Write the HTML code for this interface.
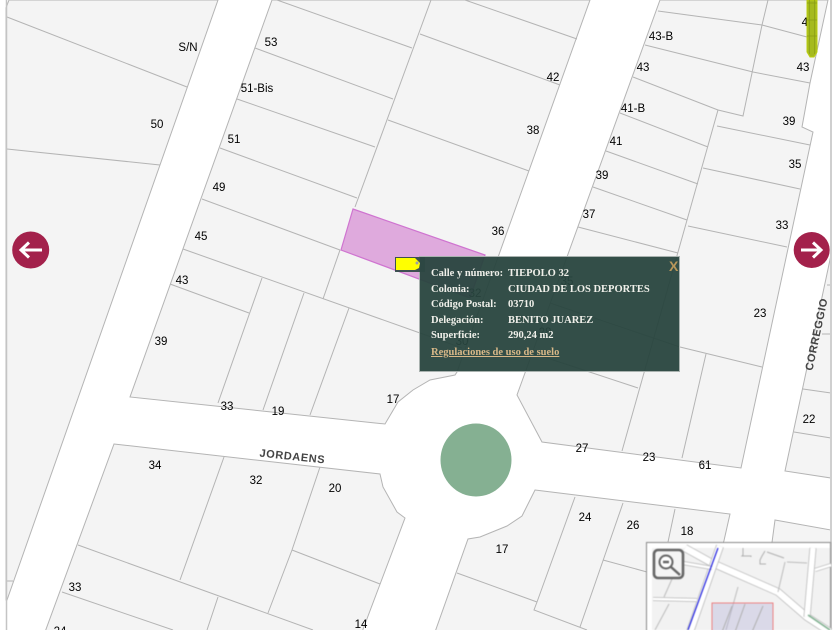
<!DOCTYPE html>
<html><head><meta charset="utf-8"><title>Mapa</title>
<style>
html,body{margin:0;padding:0;background:#fff;}
#w{position:relative;width:840px;height:630px;overflow:hidden;background:#fff;}
svg{position:absolute;left:0;top:0;}
#map{filter:blur(.35px);}
#map text{font-family:"Liberation Sans",sans-serif;font-size:11.5px;fill:#000;text-anchor:middle;}
#pop{position:absolute;left:420px;top:257px;width:259px;height:114px;background:rgba(40,68,62,.95);box-shadow:0 0 0 1px #a9b2af;box-sizing:border-box;filter:blur(.2px);}
#pop div{position:absolute;font:bold 10.5px/12px "Liberation Serif",serif;color:#f0f0ea;white-space:nowrap;}
#pop .b{left:88px;}
#pop .a{left:11px;}
</style></head><body><div id="w">
<svg id="map" width="840" height="630" viewBox="0 0 840 630">
<g fill="#f4f4f4" stroke="#b4b4b4" stroke-width="1">
<polygon points="6,8 9,0 218,0 7,600 6,600"/>
<polygon points="272,0 590,0 457,372 455,375 430,380 413,390 398,402 385,424 130,397"/>
<polygon points="660,0 828,0 810,83 802,127 813,132 741,468 542,442 517,395"/>
<polygon points="831,255 785,471 831,478"/>
<polygon points="114,444 380,474 383,487 397,512 405,518 362,632 45,632"/>
<polygon points="535,490 730,514 723,545 720,632 435,632 468,539 480,537 507,526 522,516"/>
<polygon points="775,520 831,530 831,632 760,632"/>
</g>
<polygon points="353,209 485,255 470,298 341,250" fill="#dfaadd" stroke="#cf74d0" stroke-width="1.2"/>
<g fill="none" stroke="#b4b4b4" stroke-width="1">
<path d="M7,17L187,87M7,149L160,165M6,581H13"/>
<path d="M431,0L355,207M340,250L323,299"/>
<path d="M277,0L412,48M255,48L393,99M237,99L375,147M220,148L357,198M202,199L340,250"/>
<path d="M465,0L577,39M420,34L560,85M388,120L529,171"/>
<path d="M183,249L420,333L462,348"/>
<path d="M262,278L218,403M304,293L263,410M349,308L310,415M170,284L249,313"/>
<path d="M658,11L762,25M645,45L753,72M633,77L718,110M620,113L708,147M606,151L698,184M593,187L687,220M578,227L678,253"/>
<path d="M768,0L762,25L752,73L743,116L718,110L622,451"/>
<path d="M762,25L807,37M753,72L810,83M717,126L810,145M703,168L800,189M688,226L787,247"/>
<path d="M550,303L680,347L762,367M706,354L682,458M532,353L638,388"/>
<path d="M827,285H831M822,334H831M803,389L831,393M794,432L831,438"/>
<path d="M78,545L313,630M224,457L180,580M320,467L292,550L268,613M292,550L380,584M62,592L173,630M218,597L207,630"/>
<path d="M575,497L537,602L534,610L587,630M457,573L537,602M623,503L580,627M603,560L647,572M675,509L668,542"/>
</g>
<path d="M6.5,0V630" stroke="#c4c4c4" stroke-width="1.5"/>
<path d="M831,0V630" stroke="#cfcfcf" stroke-width="2"/>
<ellipse cx="476" cy="460" rx="35.5" ry="36.5" fill="#85b092"/>
<g>
<text x="188" y="51">S/N</text><text x="271" y="46">53</text><text x="257" y="92">51-Bis</text>
<text x="157" y="128">50</text><text x="234" y="143">51</text><text x="219" y="191">49</text>
<text x="201" y="240">45</text><text x="182" y="284">43</text><text x="161" y="345">39</text>
<text x="227" y="410">33</text><text x="278" y="415">19</text><text x="393" y="403">17</text>
<text x="155" y="469">34</text><text x="256" y="484">32</text><text x="335" y="492">20</text>
<text x="75" y="591">33</text><text x="361" y="628">14</text><text x="60" y="635">24</text>
<text x="553" y="81">42</text><text x="533" y="134">38</text><text x="498" y="235">36</text>
<text x="589" y="218">37</text><text x="602" y="179">39</text><text x="616" y="145">41</text>
<text x="633" y="112">41-B</text><text x="643" y="71">43</text><text x="661" y="40">43-B</text>
<text x="803" y="71">43</text><text x="789" y="125">39</text><text x="795" y="168">35</text>
<text x="782" y="229">33</text><text x="760" y="317">23</text><text x="809" y="423">22</text>
<text x="582" y="452">27</text><text x="649" y="461">23</text><text x="705" y="469">61</text>
<text x="585" y="521">24</text><text x="633" y="529">26</text><text x="687" y="535">18</text>
<text x="502" y="553">17</text><text x="808" y="26">41</text>
<text x="567" y="285">35</text><text x="475" y="297">32</text><text x="462" y="345">30</text><text x="545" y="336">28</text>
<text transform="translate(292,460) rotate(6)" style="font-size:11px;letter-spacing:.6px;font-weight:bold;fill:#444">JORDAENS</text>
<text transform="translate(820,335) rotate(-78)" style="font-size:11px;letter-spacing:.6px;font-weight:bold;fill:#444">CORREGGIO</text>
</g>
<!-- green marker top right -->
<g>
<path d="M807,0H817V52L814,57H810L807,52Z" fill="#a5ba1e" stroke="#bccf10" stroke-width="1"/>
<path d="M809.5,0V54M814.5,0V54M807,3H817M807,20H817M807,36H817" stroke="#8b9d16" stroke-width=".7" fill="none"/>
</g>
<!-- arrows -->
<circle cx="30.7" cy="250" r="18.5" fill="#a3214b"/>
<path d="M42,250H22M29,242.5L21,250L29,257.5" fill="none" stroke="#fff" stroke-width="3"/>
<circle cx="811.7" cy="250" r="18" fill="#a3214b"/>
<path d="M801,250H821M813,242.5L821,250L813,257.5" fill="none" stroke="#fff" stroke-width="3"/>
</svg>

<div id="pop">
<div class="a" style="top:11px">Calle y número:</div><div class="b" style="top:11px">TIEPOLO 32</div>
<div class="a" style="top:27px">Colonia:</div><div class="b" style="top:27px">CIUDAD DE LOS DEPORTES</div>
<div class="a" style="top:42px">Código Postal:</div><div class="b" style="top:42px">03710</div>
<div class="a" style="top:58px">Delegación:</div><div class="b" style="top:58px">BENITO JUAREZ</div>
<div class="a" style="top:73px">Superficie:</div><div class="b" style="top:73px">290,24 m2</div>
<div class="a" style="top:90px;color:#d8b888;text-decoration:underline">Regulaciones de uso de suelo</div>
<div style="left:249px;top:2px;font:bold 14px/14px 'Liberation Sans',sans-serif;color:#b8965a">X</div>
</div>

<svg width="840" height="630" viewBox="0 0 840 630" style="pointer-events:none">
<!-- tag -->
<rect x="395" y="257" width="30" height="15" fill="#2c4742" opacity=".9"/>
<polygon points="396,258 415,258 420,263 419,268 415,270 396,270" fill="#ffff00"/>
<circle cx="417" cy="263" r="1.5" fill="#9aa0a8"/>
<!-- minimap -->
<g style="filter:blur(.4px)">
<rect x="646.5" y="542.5" width="184" height="90" fill="#fff" stroke="#8a8a8a" stroke-width="1"/>
<rect x="652" y="548" width="178" height="82" fill="#f2f2f2"/>
<g fill="none" stroke-linecap="butt">
<path d="M685,548L712,563L778,592L807,617L830,632" stroke="#b8b8b8" stroke-width="8"/>
<path d="M685,548L712,563L778,592L807,617L830,632" stroke="#fff" stroke-width="6.5"/>
<path d="M720,546L690,632" stroke="#b8b8b8" stroke-width="8"/>
<path d="M720,546L690,632" stroke="#fff" stroke-width="6.5"/>
<path d="M813,548L807,617" stroke="#b8b8b8" stroke-width="7"/>
<path d="M813,548L807,617" stroke="#fff" stroke-width="5.5"/>
<path d="M653,599L697,600M683,563L712,568M815,570L831,565" stroke="#b8b8b8" stroke-width="4"/>
<path d="M653,599L697,600M683,563L712,568M815,570L831,565" stroke="#fff" stroke-width="2.5"/>
<path d="M669,604L655,630M676,570L664,597M738,587L726,630M785,562L778,592M807,563L787,562" stroke="#bcbcbc" stroke-width="1"/>
<path d="M743,548V555L742,556H751V557M765,551L762,556L760,560V564H766M767,552L784,558" stroke="#b0b0b0" stroke-width="1"/>
</g>
<rect x="712" y="603" width="61" height="30" fill="rgba(180,175,215,.38)" stroke="#ee7777" stroke-width=".9"/>
<path d="M732,606L722,632M745,604L735,632M763,606L752,632" stroke="#b0b0b0" stroke-width="1" fill="none"/>
<path d="M808,615L830,630" stroke="#7fb08f" stroke-width="1.6" fill="none"/>
<path d="M718,548L688,630" stroke="#2323e0" stroke-width="1.2" fill="none"/>
<rect x="654" y="550" width="29" height="28" rx="4" fill="#f4f4f4" stroke="#666" stroke-width="2.6"/>
<circle cx="666" cy="562" r="6.5" fill="#fff" stroke="#666" stroke-width="2"/>
<path d="M663,562H669M671,567L680,575" stroke="#666" stroke-width="2.4" fill="none"/>
</g>
</svg>
</div></body></html>
